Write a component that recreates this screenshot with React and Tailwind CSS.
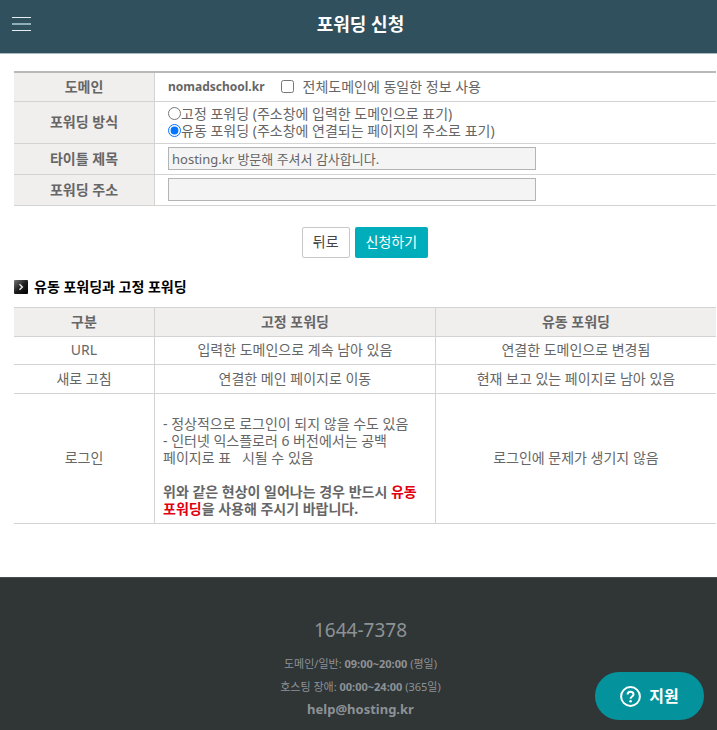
import React from 'react';

const COMPARISON = [
  { label: 'URL', fixed: '입력한 도메인으로 계속 남아 있음', dynamic: '연결한 도메인으로 변경됨', height: 'h-7' },
  { label: '새로 고침', fixed: '연결한 메인 페이지로 이동', dynamic: '현재 보고 있는 페이지로 남아 있음', height: 'h-[29px]' },
];

function Header() {
  return (
    <header className="grid h-[54px] grid-cols-[1fr_auto_1fr] items-center border-b border-[#a9b9c0] bg-[#30505e] px-3 pb-[5px]">
      <button type="button" aria-label="메뉴" className="flex w-[19px] flex-col gap-[5px]">
        <span className="h-px w-full bg-[#e4edf0]" />
        <span className="h-0.5 w-full bg-[#8fb0bb]" />
        <span className="h-px w-full bg-[#e4edf0]" />
      </button>
      <h1 className="pl-1 text-[18px] leading-6 font-bold text-white">포워딩 신청</h1>
    </header>
  );
}

function FormRow({ label, htmlFor, height, children }) {
  return (
    <tr className={height}>
      <th scope="row" className="border-r border-b border-[#d3d3d3] bg-[#f1eeee] px-0 pt-0 pb-0.5 text-center font-bold">
        {htmlFor ? <label htmlFor={htmlFor}>{label}</label> : label}
      </th>
      <td className="border-b border-[#d3d3d3] pt-0 pr-2 pb-0.5 pl-[13px]">{children}</td>
    </tr>
  );
}

function ForwardingForm() {
  const field = 'block h-[23px] w-full max-w-[368px] border border-[#b4b4b4] bg-[#f4f4f4] px-[3px] text-[13px] text-[#666]';
  return (
    <form onSubmit={(e) => e.preventDefault()}>
      <table className="w-full table-fixed border-separate border-spacing-0 border-t-2 border-[#b9b9b9]">
        <colgroup>
          <col className="w-[141px]" />
          <col />
        </colgroup>
        <tbody>
          <FormRow label="도메인" height="h-[29px]">
            <div className="flex items-center">
              <strong className="text-[12px]">nomadschool.kr</strong>
              <input id="same" type="checkbox" className="mr-[9px] ml-4 size-[13px]" />
              <label htmlFor="same">전체도메인에 동일한 정보 사용</label>
            </div>
          </FormRow>
          <FormRow label="포워딩 방식" height="h-[42px]">
            <div className="flex items-center">
              <input id="fixed" name="mode" type="radio" className="size-[13px]" />
              <label htmlFor="fixed">고정 포워딩 (주소창에 입력한 도메인으로 표기)</label>
            </div>
            <div className="flex items-center">
              <input id="dynamic" name="mode" type="radio" defaultChecked className="size-[13px]" />
              <label htmlFor="dynamic">유동 포워딩 (주소창에 연결되는 페이지의 주소로 표기)</label>
            </div>
          </FormRow>
          <FormRow label="타이틀 제목" htmlFor="title" height="h-[31px]">
            <input id="title" type="text" defaultValue="hosting.kr 방문해 주셔서 감사합니다." className={field} />
          </FormRow>
          <FormRow label="포워딩 주소" htmlFor="address" height="h-[31px]">
            <input id="address" type="text" className={field} />
          </FormRow>
        </tbody>
      </table>
      <div className="mt-[21px] flex justify-center gap-[5px]">
        <button type="button" className="h-[31px] rounded-xs border border-[#c8c8c8] bg-white px-2.5 pb-0.5 text-[#444]">뒤로</button>
        <button type="submit" className="h-[31px] rounded-xs bg-[#00aebb] px-[11px] pb-0.5 text-white">신청하기</button>
      </div>
    </form>
  );
}

function Comparison() {
  const line = 'border-b border-[#d3d3d3]';
  return (
    <section className="mt-5">
      <h2 className="flex items-center gap-[6px] leading-[17px] font-bold text-black">
        <svg width="14" height="14" viewBox="0 0 14 14" aria-hidden="true">
          <defs>
            <linearGradient id="bullet" x1="0" y1="0" x2="1" y2="1">
              <stop offset="0" stopColor="#777" />
              <stop offset="0.5" stopColor="#1c1c1c" />
              <stop offset="1" stopColor="#000" />
            </linearGradient>
          </defs>
          <rect width="14" height="14" rx="1" fill="url(#bullet)" />
          <path d="M5.5 4.2L8.3 7L5.5 9.8" fill="none" stroke="#ddd" strokeWidth="1.6" />
        </svg>
        유동 포워딩과 고정 포워딩
      </h2>
      <table className="mt-3 w-full table-fixed border-separate border-spacing-0 border-t border-[#d3d3d3] text-center">
        <colgroup>
          <col className="w-[141px]" />
          <col className="w-[40%]" />
          <col />
        </colgroup>
        <thead>
          <tr className="h-[29px] bg-[#f1eeee]">
            <th scope="col" className={`${line} border-r px-0 pt-0 pb-0.5`}>구분</th>
            <th scope="col" className={`${line} border-r px-0 pt-0 pb-0.5`}>고정 포워딩</th>
            <th scope="col" className={`${line} px-0 pt-0 pb-0.5`}>유동 포워딩</th>
          </tr>
        </thead>
        <tbody>
          {COMPARISON.map((row) => (
            <tr key={row.label} className={row.height}>
              <td className={`${line} border-r px-0 pt-0 pb-0.5`}>{row.label}</td>
              <td className={`${line} border-r px-0 pt-0 pb-0.5`}>{row.fixed}</td>
              <td className={`${line} px-0 pt-0 pb-0.5`}>{row.dynamic}</td>
            </tr>
          ))}
          <tr>
            <td className={`${line} border-r px-0 pt-0 pb-0.5`}>로그인</td>
            <td className={`${line} border-r px-2 pt-[21px] pb-[6px] text-left`}>
              <p>- 정상적으로 로그인이 되지 않을 수도 있음</p>
              <p>
                - 인터넷 익스플로러 6 버전에서는 공백
                <br />
                페이지로 표&nbsp;&nbsp; 시될 수 있음
              </p>
              <p className="mt-[17px] font-bold">
                위와 같은 현상이 일어나는 경우 반드시{' '}
                <span className="text-[#e00010]">
                  유동
                  <br />
                  포워딩
                </span>
                을 사용해 주시기 바랍니다.
              </p>
            </td>
            <td className={`${line} px-0 pt-0 pb-0.5`}>로그인에 문제가 생기지 않음</td>
          </tr>
        </tbody>
      </table>
    </section>
  );
}

function Footer() {
  return (
    <footer className="mt-[53px] grow border-t border-[#47504f] bg-[#303536] pt-[38px] pl-1 text-center text-[#8d9296]">
      <p className="text-[19px] leading-7">1644-7378</p>
      <p className="mt-2 text-[11px] leading-[23px]">
        도메인/일반: <b>09:00~20:00</b> (평일)
      </p>
      <p className="text-[11px] leading-[23px]">
        호스팅 장애: <b>00:00~24:00</b> (365일)
      </p>
      <a href="mailto:help@hosting.kr" className="block text-[13px] leading-[22px] font-bold">help@hosting.kr</a>
    </footer>
  );
}

export default function App() {
  return (
    <div className="flex min-h-screen flex-col bg-white font-['Noto_Sans','Noto_Sans_CJK_KR',sans-serif] text-[14px] leading-[17px] text-[#666]">
      <Header />
      <main className="mt-[17px] mr-px ml-[14px]">
        <ForwardingForm />
        <Comparison />
      </main>
      <Footer />
      <button type="button" className="fixed right-[13px] bottom-[10px] flex h-12 w-[109px] items-center justify-center gap-2 rounded-full bg-[#04939c] text-[16px] font-bold text-white">
        <svg width="21" height="21" viewBox="0 0 21 21" fill="none" stroke="#fff" aria-hidden="true">
          <circle cx="10.5" cy="10.5" r="9.4" strokeWidth="2" />
          <path d="M7.6 8.5C7.6 4.7 13.5 4.8 13.5 8.4C13.5 10.4 10.6 10.7 10.6 12.8" strokeWidth="2" />
          <circle cx="10.6" cy="15.3" r="1.3" fill="#fff" stroke="none" />
        </svg>
        지원
      </button>
    </div>
  );
}
